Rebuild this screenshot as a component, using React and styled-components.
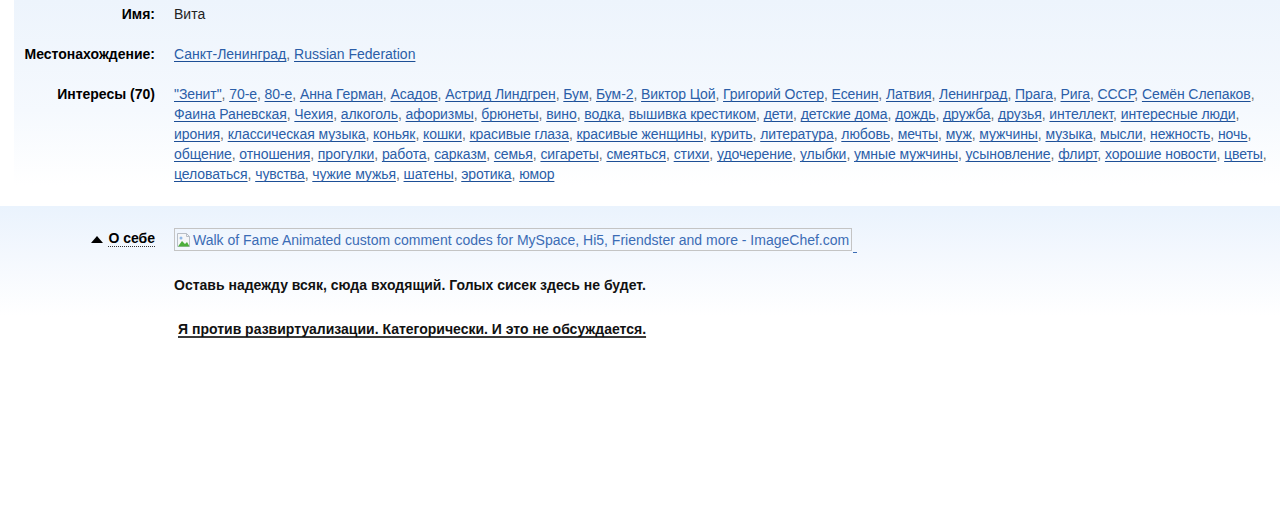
import React from "react";
import styled, { createGlobalStyle } from "styled-components";

const GlobalStyle = createGlobalStyle`
  html, body {
    margin: 0;
    padding: 0;
    background: #ffffff;
  }
  body {
    font-family: "Liberation Sans", Arial, sans-serif;
    font-size: 14px;
    color: #222222;
  }
`;

const Page = styled.div`
  width: 1280px;
`;

const InfoSection = styled.section`
  margin-left: 14px;
  padding: 4px 0 22px;
  background: linear-gradient(to bottom, #edf4fc 0px, #f5f9fe 110px, #ffffff 185px);
  display: grid;
  grid-template-columns: 141px 1fr;
  column-gap: 19px;
  row-gap: 20px;
`;

const AboutSection = styled.section`
  padding: 22px 0 0 14px;
  min-height: 290px;
  background: linear-gradient(to bottom, #eaf3fd 0px, #f4f8fe 50px, #ffffff 110px);
  display: grid;
  grid-template-columns: 141px 1fr;
  column-gap: 19px;
  align-content: start;
`;

const Label = styled.div`
  text-align: right;
  font-weight: bold;
  font-size: 14px;
  line-height: 20px;
  color: #000000;
  white-space: nowrap;
`;

const Value = styled.div`
  line-height: 20px;
  font-size: 14px;
  color: #222222;
  letter-spacing: ${(p) => (p.$tight ? "-0.08px" : "normal")};
`;

const Link = styled.a`
  color: #2b5ea8;
  text-decoration: underline;
  text-decoration-color: #1d4f96;
  text-decoration-skip-ink: none;
  text-underline-offset: 2px;
  cursor: pointer;
`;

const Sep = styled.span`
  color: #666666;
`;

const ToggleLabel = styled.div`
  display: flex;
  justify-content: flex-end;
  align-items: center;
  gap: 5px;
  font-weight: bold;
  font-size: 14px;
  color: #000000;
  height: 22px;
`;

const Dotted = styled.span`
  border-bottom: 1px dotted #333333;
  line-height: 15px;
`;

const ImageLink = styled.a`
  display: inline-flex;
  align-items: flex-end;
  text-decoration: none;
  color: #2e63b0;
`;

const BrokenImage = styled.span`
  display: inline-flex;
  align-items: center;
  gap: 1px;
  height: 21px;
  padding: 0 2px 0 1px;
  border: 1px solid #c4c4c4;
  font-size: 14px;
  color: #3b6cb5;
  white-space: nowrap;
`;

const TrailDash = styled.span`
  width: 4px;
  margin-left: 1px;
  border-bottom: 1px solid #3b6cb5;
  height: 2px;
  margin-bottom: -2px;
`;

const Motto = styled.p`
  margin: 0;
  font-weight: bold;
  font-size: 14px;
  line-height: 20px;
  color: #111111;
  padding-left: ${(p) => p.$indent || 0}px;
`;

const Underlined = styled.span`
  text-decoration: underline;
  text-decoration-thickness: 2px;
  text-decoration-color: #3a3a3a;
  text-decoration-skip-ink: none;
  text-underline-offset: 2px;
`;

const AboutBody = styled.div`
  display: flex;
  flex-direction: column;
  gap: 24px;
`;

const interests = [
  "\"Зенит\"", "70-е", "80-е", "Анна Герман", "Асадов", "Астрид Линдгрен", "Бум", "Бум-2",
  "Виктор Цой", "Григорий Остер", "Есенин", "Латвия", "Ленинград", "Прага", "Рига", "СССР",
  "Семён Слепаков", "Фаина Раневская", "Чехия", "алкоголь", "афоризмы", "брюнеты", "вино",
  "водка", "вышивка крестиком", "дети", "детские дома", "дождь", "дружба", "друзья",
  "интеллект", "интересные люди", "ирония", "классическая музыка", "коньяк", "кошки",
  "красивые глаза", "красивые женщины", "курить", "литература", "любовь", "мечты", "муж",
  "мужчины", "музыка", "мысли", "нежность", "ночь", "общение", "отношения", "прогулки",
  "работа", "сарказм", "семья", "сигареты", "смеяться", "стихи", "удочерение", "улыбки",
  "умные мужчины", "усыновление", "флирт", "хорошие новости", "цветы", "целоваться",
  "чувства", "чужие мужья", "шатены", "эротика", "юмор",
];

function BrokenIcon() {
  return (
    <svg width="16" height="16" viewBox="0 0 16 16">
      <path d="M1.5 1.5h9l3 3v10h-12z" fill="#f4f6f8" stroke="#b8bec6" />
      <path d="M10.5 1.5v3h3" fill="none" stroke="#b8bec6" />
      <path d="M2 14.5 L6 9 L9 12 L11 10 L13.5 14.5 Z" fill="#4caf3c" />
      <circle cx="5" cy="6" r="1.5" fill="#8fb8e8" />
    </svg>
  );
}

function Triangle() {
  return (
    <svg width="12" height="7" viewBox="0 0 12 7">
      <path d="M0 7 L6 0 L12 7 Z" fill="#000000" />
    </svg>
  );
}

export default function App() {
  return (
    <Page>
      <GlobalStyle />
      <InfoSection>
        <Label>Имя:</Label>
        <Value>Вита</Value>

        <Label>Местонахождение:</Label>
        <Value>
          <Link>Санкт-Ленинград</Link>
          <Sep>, </Sep>
          <Link>Russian Federation</Link>
        </Value>

        <Label>Интересы (70)</Label>
        <Value $tight>
          {interests.map((item, i) => (
            <React.Fragment key={item}>
              <Link>{item}</Link>
              {i < interests.length - 1 && <Sep>, </Sep>}
            </React.Fragment>
          ))}
        </Value>
      </InfoSection>

      <AboutSection>
        <ToggleLabel>
          <Triangle />
          <Dotted>О себе</Dotted>
        </ToggleLabel>
        <AboutBody>
          <div>
            <ImageLink>
              <BrokenImage>
                <BrokenIcon />
                Walk of Fame Animated custom comment codes for MySpace, Hi5, Friendster and more - ImageChef.com
              </BrokenImage>
              <TrailDash />
            </ImageLink>
          </div>
          <Motto>Оставь надежду всяк, сюда входящий. Голых сисек здесь не будет.</Motto>
          <Motto $indent={4}>
            <Underlined>Я против развиртуализации. Категорически. И это не обсуждается.</Underlined>
          </Motto>
        </AboutBody>
      </AboutSection>
    </Page>
  );
}
